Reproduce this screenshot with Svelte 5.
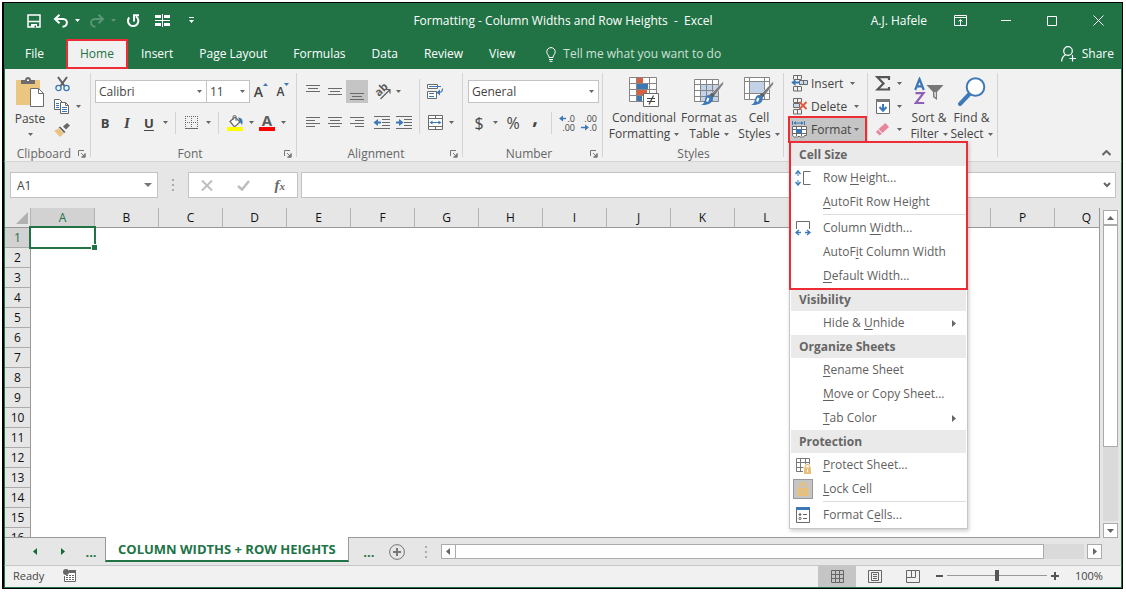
<script>
  const tabs = ['File', 'Home', 'Insert', 'Page Layout', 'Formulas', 'Data', 'Review', 'View'];
  const columns = 'ABCDEFGHIJKLMNOPQ'.split('');
  const rows = Array.from({ length: 16 }, (_, i) => i + 1);
  let zoom = $state(50);
</script>

{#snippet caret()}
  <svg class="caret" width="5" height="3" viewBox="0 0 5 3" aria-hidden="true"><path d="M0 0h5L2.5 3z" fill="currentColor" /></svg>
{/snippet}

{#snippet lines(y, kind)}
  <svg width="16" height="16" viewBox="0 0 16 16" stroke="#6a6a6a" shape-rendering="crispEdges" aria-hidden="true">
    {#if kind === 'left'}
      <path d="M1 2.5h14M1 5.5h9M1 8.5h14M1 11.5h9" />
    {:else if kind === 'center'}
      <path d="M1 2.5h14M3 5.5h10M1 8.5h14M3 11.5h10" />
    {:else if kind === 'right'}
      <path d="M1 2.5h14M6 5.5h9M1 8.5h14M6 11.5h9" />
    {:else}
      <path d="M1 {y + 0.5}h14M3 {y + 3.5}h10M1 {y + 6.5}h14" />
    {/if}
  </svg>
{/snippet}

{#snippet indent(right)}
  <svg width="18" height="16" viewBox="0 0 18 16" fill="none" aria-hidden="true">
    <path d="M1 1.5h16M9 4.5h8M9 7.5h8M9 10.5h8M1 13.5h16" stroke="#6a6a6a" shape-rendering="crispEdges" />
    {#if right}
      <path d="M1 7.5h5" stroke="#3b78b5" stroke-width="2" /><path d="M4 4l4.500 3.500L4 11z" fill="#3b78b5" />
    {:else}
      <path d="M3 7.500h5" stroke="#3b78b5" stroke-width="2" /><path d="M5 4L.5 7.500 5 11z" fill="#3b78b5" />
    {/if}
  </svg>
{/snippet}

{#snippet launcher(label)}
  <button class="launcher" aria-label={label}>
    <svg width="8" height="8" viewBox="0 0 8 8" fill="none" stroke="#777" aria-hidden="true"><path d="M.5 6V.5H6M3 3l3 3" /><path d="M7.500 3v4.500H3z" fill="#777" stroke="none" /><path d="M7 3.500V7H3.500" /></svg>
  </button>
{/snippet}

{#snippet brush()}
  <path d="M29.500 7L20.500 19l-3-2.500L29 4.500z" fill="#7d7d7d" stroke="#f0f0f0" stroke-width=".6" />
  <path d="M20.500 18.500c-.5-1.500-1.500-2.500-3-2.500l-2 2 3 3z" fill="#5f5f5f" />
  <path d="M15 18c2 0 3.800 1.500 3.800 3.500 0 4-4 7-11.800 6.500 3-1 3.500-3 4-5.500.5-2.500 2-4.500 4-4.500z" fill="#3f7ab8" />
  <path d="M14.500 21l-1.500 3.500" stroke="#fff" stroke-width="2" />
{/snippet}

{#snippet cellsIcon(kind)}
  <svg width="17" height="17" viewBox="0 0 17 17" fill="none" stroke="#6a6a6a" aria-hidden="true">
    {#if kind === 'format'}
      <path d="M1.500 0v4M13.500 0v4M3 2h9" stroke="#3b78b5" /><path d="M5 .2L2.500 2 5 3.800zM10 .2L12.500 2 10 3.800z" fill="#3b78b5" stroke="none" />
      <path d="M1.500 5.500h14v9h-2l-1 1.500H9l-1-1-1 1H3.500l-2-1.500z" fill="#fff" /><path d="M5.500 5v10M10.500 5v10M1 8.500h15M1 12.500h15" />
      <path d="M5 8h6v4H5z" fill="#3b78b5" stroke="none" />
    {:else}
      <path d="M2.500 4V.5h8V4M6.500.5V4M2.500 4.500h8M2.500 12v4h8v-4M6.500 12v4M2.500 11.500h8" />
      {#if kind === 'insert'}
        <path d="M8.500 5.500h8v4h-8zM12.500 5.500v4" fill="#c9daec" /><path d="M3 7.500h6" stroke="#3b78b5" stroke-width="2" /><path d="M4.500 4L.3 7.500l4.200 3.500z" fill="#3b78b5" stroke="none" />
      {:else}
        <path d="M2.500 5.500h6v4h-6z" fill="#c9daec" /><path d="M8.500 4l7 7M15.500 4l-7 7" stroke="#dd5b3f" stroke-width="2" />
      {/if}
    {/if}
  </svg>
{/snippet}

<div class="window">
  <header class="titlebar">
    <div class="quick">
      <button aria-label="Save"><svg width="14" height="14" viewBox="0 0 14 14" fill="none" stroke="#fff" stroke-width="1.500"><path d="M1 1h12v12H1zM1 7.500h12" /><path d="M4 10h6v3H4z" fill="#fff" stroke="none" /><path d="M7.500 11.500h1.500v2H7.500z" fill="#217346" stroke="none" /></svg></button>
      <span class="pair">
        <button aria-label="Undo"><svg width="16" height="14" viewBox="0 0 16 14" fill="none" stroke="#fff" stroke-width="2"><path d="M6.500 .8L2 5l4.500 4.200M2 5h8c5.500 0 5 7.500-.5 7.800" /></svg></button>
        <button class="drop" aria-label="Undo history">{@render caret()}</button>
      </span>
      <span class="pair faded">
        <button aria-label="Redo"><svg width="16" height="14" viewBox="0 0 16 14" fill="none" stroke="#fff" stroke-width="2"><path d="M9.500 .8L14 5 9.500 9.200M14 5H6C.5 5 1 12.500 6.500 12.800" /></svg></button>
        <button class="drop" aria-label="Redo history">{@render caret()}</button>
      </span>
      <button aria-label="Repeat"><svg width="14" height="14" viewBox="0 0 14 14" fill="none" stroke="#fff" stroke-width="2"><path d="M3.200 3.500A5.200 5.200 0 1 0 10 2.500M8 7.500V1.200h5" /></svg></button>
      <button class="wide" aria-label="Merge layout"><svg width="15" height="13" viewBox="0 0 15 13" fill="#fff" shape-rendering="crispEdges"><path d="M0 1h6v3H0zM9 1h6v3H9zM0 9h6v3H0zM9 9h6v3H9zM7 0h1v13H7zM0 6h15v1H0z" /></svg></button>
      <button aria-label="Customize toolbar"><svg width="5" height="7" viewBox="0 0 5 7" fill="#fff"><path d="M0 0h5v1H0zM0 3h5L2.500 6z" /></svg></button>
    </div>
    <h1>Formatting - Column Widths and Row Heights&nbsp; -&nbsp; Excel</h1>
    <div class="system">
      <span class="user">A.J. Hafele</span>
      <button aria-label="Ribbon display options"><svg width="13" height="11" viewBox="0 0 13 11" fill="none" stroke="#fff"><path d="M.5.5h12v10H.5zM.5 2.500h12M6.500 10V5M4.500 6.500l2-2 2 2" /></svg></button>
      <button aria-label="Minimize"><svg width="10" height="10" viewBox="0 0 10 10" stroke="#fff"><path d="M0 4.500h10" /></svg></button>
      <button aria-label="Maximize"><svg width="10" height="10" viewBox="0 0 10 10" fill="none" stroke="#fff"><path d="M.5.5h9v9h-9z" /></svg></button>
      <button aria-label="Close"><svg width="11" height="11" viewBox="0 0 11 11" stroke="#fff"><path d="M.5.500l10 10M10.500.5l-10 10" /></svg></button>
    </div>
  </header>

  <nav class="tabs">
    {#each tabs as tab}
      <button class="tab" class:active={tab === 'Home'}>{tab}</button>
    {/each}
    <button class="tell">
      <svg width="10" height="15" viewBox="0 0 10 15" fill="none" stroke="#fff" aria-hidden="true"><path d="M3 10.500C3 8 .8 7.500.8 4.800a4.200 4.200 0 0 1 8.400 0C9.200 7.500 7 8 7 10.500zM3 12.500h4M3.500 14.300h3" /></svg>
      Tell me what you want to do
    </button>
    <button class="share">
      <svg width="15" height="16" viewBox="0 0 15 16" fill="none" stroke="#fff" stroke-width="1.200" aria-hidden="true"><circle cx="7" cy="5" r="4.300" /><path d="M.6 15.500c.2-3.500 1.700-5.500 4-6.700M8.500 12.500H15M11.500 9v6.500" /></svg>
      Share
    </button>
  </nav>

  <section class="ribbon" aria-label="Ribbon">
    <div class="group clipboard">
      <div class="body">
        <button class="big paste">
          <svg width="28" height="31" viewBox="0 0 28 31" aria-hidden="true"><path d="M0 3h24v25H0z" fill="#ebc680" /><path d="M5 7V3h4c0-4 6-4 6 0h4v4z" fill="#6c6c6c" /><path d="M11 2.500h2V4h-2z" fill="#fff" /><path d="M14.500 11.500h8l5 5v13h-13z" fill="#fff" stroke="#6c6c6c" /><path d="M22.500 11.500v5h5" fill="none" stroke="#6c6c6c" /></svg>
          <span>Paste</span>{@render caret()}
        </button>
        <div class="stack">
          <div class="line"><button class="tool" aria-label="Cut"><svg width="15" height="16" viewBox="0 0 15 16" fill="none"><path d="M3 1l6.500 9M12 1L5.500 10" stroke="#5d5d5d" stroke-width="2" /><circle cx="3.500" cy="12" r="2.600" stroke="#3b78b5" stroke-width="1.300" /><circle cx="11.500" cy="12" r="2.600" stroke="#3b78b5" stroke-width="1.300" /></svg></button></div>
          <div class="line"><button class="tool" aria-label="Copy"><svg width="16" height="15" viewBox="0 0 16 15" fill="#fff" stroke="#666"><path d="M.5.5h5l3 3v7h-8z" /><path d="M6.500 3.500h5l3 3v8h-8z" /><path d="M11.500 3.500v3h3" fill="none" /><path d="M2 4.500h3M2 6.500h3M2 8.500h3M8 8.500h5M8 10.500h5M8 12.500h5" stroke="#3b78b5" /></svg></button><button class="drop" aria-label="Copy options">{@render caret()}</button></div>
          <div class="line"><button class="tool" aria-label="Format painter"><svg width="16" height="14" viewBox="0 0 16 14"><path d="M13 0l3 2.500-4 4-3-3z" fill="#666" /><path d="M6 3l6 6-2 1.500L4.500 4.500z" fill="#666" stroke="#f0f0f0" stroke-width=".8" /><path d="M4.500 5l5 5.500L6 14 0 7.500c2 0 3-1 4.500-2.500z" fill="#ebc27d" /></svg></button></div>
        </div>
      </div>
      <div class="caption"><span>Clipboard</span>{@render launcher('Clipboard settings')}</div>
    </div>

    <div class="group font">
      <div class="body rows">
        <div class="line">
          <label class="select face"><select aria-label="Font"><option>Calibri</option></select>{@render caret()}</label>
          <label class="select size"><select aria-label="Font size"><option>11</option></select>{@render caret()}</label>
          <button class="tool grow" aria-label="Increase font size"><b class="a1">A</b><svg width="5" height="3" viewBox="0 0 5 3"><path d="M0 3h5L2.500 0z" fill="#3b78b5" /></svg></button>
          <button class="tool grow" aria-label="Decrease font size"><b class="a2">A</b><svg width="5" height="3" viewBox="0 0 5 3"><path d="M0 0h5L2.500 3z" fill="#3b78b5" /></svg></button>
        </div>
        <div class="line">
          <button class="tool letter"><b>B</b></button><button class="tool letter"><i>I</i></button><button class="tool letter"><u>U</u></button><button class="drop" aria-label="Underline style">{@render caret()}</button>
          <span class="rule"></span>
          <button class="tool" aria-label="Borders"><svg width="14" height="14" viewBox="0 0 14 14" fill="none" stroke="#6a6a6a"><path d="M.5 0v13M6.500 0v13M12.500 0v13M0 .5h13M0 6.500h13" stroke-dasharray="1 1" /><path d="M0 12.500h13" /></svg></button><button class="drop" aria-label="Border style">{@render caret()}</button>
          <span class="rule"></span>
          <button class="tool" aria-label="Fill color"><svg width="17" height="16" viewBox="0 0 17 16"><path d="M3 6.500L8 2l5 5-5.500 5z" fill="#fff" stroke="#666" stroke-width="1.200" /><path d="M6 5V1.500C6 0 9 0 9 1.500V6" fill="none" stroke="#666" /><path d="M11 2.500c4 0 5.500 3 4 7.500l-2-3z" fill="#3b78b5" /><path d="M0 12h16v4H0z" fill="#ff0" /></svg></button><button class="drop" aria-label="Fill colors">{@render caret()}</button>
          <button class="tool ink" aria-label="Font color"><b>A</b></button><button class="drop" aria-label="Font colors">{@render caret()}</button>
        </div>
      </div>
      <div class="caption"><span>Font</span>{@render launcher('Font settings')}</div>
    </div>

    <div class="group alignment">
      <div class="body">
        <div class="rows first">
          <div class="line">
            <button class="tool" aria-label="Top align">{@render lines(1, 'v')}</button><button class="tool" aria-label="Middle align">{@render lines(4, 'v')}</button><button class="tool on" aria-label="Bottom align">{@render lines(9, 'v')}</button>
            <button class="tool apart" aria-label="Orientation"><svg class="slant" width="17" height="16" viewBox="0 0 17 16" fill="none" stroke="#5d5d5d"><path d="M6.500 15L15.500 6M12 5.500h4v4" stroke-width="1.200" /><text x="0" y="0" transform="translate(5 13) rotate(-45)" font-size="11" font-weight="bold" fill="#5d5d5d" stroke="none">ab</text></svg></button><button class="drop" aria-label="Orientation options">{@render caret()}</button>
          </div>
          <div class="line">
            <button class="tool" aria-label="Align left">{@render lines(0, 'left')}</button><button class="tool" aria-label="Center">{@render lines(0, 'center')}</button><button class="tool" aria-label="Align right">{@render lines(0, 'right')}</button>
            <button class="tool apart" aria-label="Decrease indent">{@render indent(false)}</button><button class="tool" aria-label="Increase indent">{@render indent(true)}</button>
          </div>
        </div>
        <span class="rule tall"></span>
        <div class="rows">
          <div class="line"><button class="tool" aria-label="Wrap text"><svg width="17" height="16" viewBox="0 0 17 16" fill="none" stroke="#6a6a6a"><path d="M.5.5h10v4H.5zM.5 7.500h9v7H.5z" fill="#fff" /><path d="M2 2.500h12M2 9.500h5M2 12.500h5M15.500 4.500c0 3.500-1.500 4-4 4" stroke="#3b78b5" stroke-width="1.200" /><path d="M13 5.500L9.500 8.500 13 11.500z" fill="#3b78b5" stroke="none" /></svg></button></div>
          <div class="line"><button class="tool" aria-label="Merge and center"><svg width="15" height="15" viewBox="0 0 15 15" fill="none" stroke="#6a6a6a"><path d="M.5.5h14v14H.5z" fill="#fff" /><path d="M0 3.500h15M0 11.500h15M7.500 0v3M7.500 12v3" /><path d="M3 7.500h9" stroke="#3b78b5" /><path d="M4.500 5.500l-3 2 3 2zM10.500 5.500l3 2-3 2z" fill="#3b78b5" stroke="none" /></svg></button><button class="drop" aria-label="Merge options">{@render caret()}</button></div>
        </div>
      </div>
      <div class="caption"><span>Alignment</span>{@render launcher('Alignment settings')}</div>
    </div>

    <div class="group number">
      <div class="body rows">
        <div class="line"><label class="select general"><select aria-label="Number format"><option>General</option></select>{@render caret()}</label></div>
        <div class="line">
          <button class="tool sign">$</button><button class="drop" aria-label="Currency options">{@render caret()}</button><button class="tool sign percentage">%</button><button class="tool sign comma">,</button>
          <span class="rule"></span>
          <button class="tool decimals" aria-label="Increase decimal"><span><svg width="8" height="7" viewBox="0 0 8 7"><path d="M2 3.500h5" stroke="#3b78b5" stroke-width="1.500" /><path d="M4 .5L0 3.500l4 3z" fill="#3b78b5" /></svg>.0</span><span>.00</span></button>
          <button class="tool decimals" aria-label="Decrease decimal"><span>.00</span><span><svg width="8" height="7" viewBox="0 0 8 7"><path d="M0 3.500h5" stroke="#3b78b5" stroke-width="1.500" /><path d="M4 .5l4 3-4 3z" fill="#3b78b5" /></svg>.0</span></button>
        </div>
      </div>
      <div class="caption"><span>Number</span>{@render launcher('Number settings')}</div>
    </div>

    <div class="group styles">
      <div class="body">
        <button class="big cond">
          <svg width="30" height="30" viewBox="0 0 30 30" fill="none" aria-hidden="true"><path d="M.5.5h27v24H.5z" fill="#fff" /><path d="M8 0h6v6H8zM8 12h10v6H8z" fill="#d9603e" /><path d="M8 6h11v6H8zM8 18h5v6H8z" fill="#3b78b5" /><path d="M.5.500h27v24H.5zM7.500.5v24M20.500.5v24M.5 6.500h27M.5 12.500h27M.5 18.500h27" stroke="#858585" /><path d="M14.500 16.500h15v13h-15z" fill="#fff" stroke="#6a6a6a" /><path d="M18 21.500h8M18 24.500h8M24.500 18.500l-4.500 9" stroke="#444" stroke-width="1.200" /></svg>
          <span>Conditional</span><span>Formatting {@render caret()}</span>
        </button>
        <button class="big table">
          <svg width="30" height="30" viewBox="0 0 30 30" fill="none" aria-hidden="true"><path d="M.5 2.500h24v22H.5z" fill="#fff" /><path d="M7 8h18v17H7z" fill="#c2d3e8" /><path d="M.5 2.500h24v22H.5zM6.500 2.500v22M12.500 2.500v22M18.500 2.500v22M.5 7.500h24M.5 13.500h24M.5 19.500h24" stroke="#858585" />{@render brush()}</svg>
          <span>Format as</span><span>Table {@render caret()}</span>
        </button>
        <button class="big cell">
          <svg width="30" height="30" viewBox="0 0 30 30" fill="none" aria-hidden="true"><path d="M.5.500h25v22H.5z" fill="#fff" /><path d="M6 5h15v11H6z" fill="#c2d3e8" /><path d="M.5.500h25v22H.5zM5.500.5v22M20.500.5v22M.5 4.500h25M.5 16.500h25" stroke="#858585" />{@render brush()}</svg>
          <span>Cell</span><span>Styles {@render caret()}</span>
        </button>
      </div>
      <div class="caption"><span>Styles</span></div>
    </div>

    <div class="group cells">
      <div class="body stack">
        <button class="action">{@render cellsIcon('insert')}<span class="ins">Insert</span>{@render caret()}</button>
        <button class="action">{@render cellsIcon('delete')}<span class="ins">Delete</span>{@render caret()}</button>
        <div class="anchor">
          <button class="action open" aria-expanded="true">{@render cellsIcon('format')}<span>Format</span>{@render caret()}</button>
          <div class="menu" role="menu">
            <section class="marked">
              <h2>Cell Size</h2>
              <button class="item" role="menuitem"><span class="icon"><svg width="16" height="16" viewBox="0 0 16 16" fill="none"><path d="M3 1v5M3 10v5" stroke="#3b78b5" /><path d="M.5 4L3 1l2.500 3M.5 12L3 15l2.500-3" stroke="#3b78b5" stroke-width="1.400" /><path d="M15.500 1.500h-7v13h7" stroke="#6a6a6a" /></svg></span><span>Row <u>H</u>eight...</span></button>
              <button class="item" role="menuitem"><span class="icon"></span><span><u>A</u>utoFit Row Height</span></button>
              <hr />
              <button class="item" role="menuitem"><span class="icon"><svg width="16" height="16" viewBox="0 0 16 16" fill="none"><path d="M1.500 9V1.500h13V9" stroke="#6a6a6a" /><path d="M1 12.500h5M10 12.500h5M4 10l-3 2.500 3 2.500M12 10l3 2.500-3 2.500" stroke="#3b78b5" stroke-width="1.300" /></svg></span><span>Column <u>W</u>idth...</span></button>
              <button class="item" role="menuitem"><span class="icon"></span><span>AutoF<u>i</u>t Column Width</span></button>
              <button class="item" role="menuitem"><span class="icon"></span><span><u>D</u>efault Width...</span></button>
            </section>
            <section>
              <h2>Visibility</h2>
              <button class="item" role="menuitem"><span class="icon"></span><span>Hide &amp; <u>U</u>nhide</span><svg class="more" width="4" height="7" viewBox="0 0 4 7"><path d="M0 0l4 3.500L0 7z" fill="#666" /></svg></button>
            </section>
            <section>
              <h2>Organize Sheets</h2>
              <button class="item" role="menuitem"><span class="icon"></span><span><u>R</u>ename Sheet</span></button>
              <button class="item" role="menuitem"><span class="icon"></span><span><u>M</u>ove or Copy Sheet...</span></button>
              <button class="item" role="menuitem"><span class="icon"></span><span><u>T</u>ab Color</span><svg class="more" width="4" height="7" viewBox="0 0 4 7"><path d="M0 0l4 3.500L0 7z" fill="#666" /></svg></button>
            </section>
            <section>
              <h2>Protection</h2>
              <button class="item" role="menuitem"><span class="icon"><svg width="17" height="17" viewBox="0 0 17 17" fill="none"><path d="M8 14.500H1.500v-13h13V7M5.500 1.500v13M10.500 1.500V7M1.500 5.500h13M1.500 10.500h7" stroke="#777" /><path d="M9 10.500h7V17H9z" fill="#e9c07a" /><path d="M10.500 11V8.800c0-2 4-2 4 0V11" stroke="#e9c07a" stroke-width="1.300" /><path d="M12.500 12.500v2.500" stroke="#fff" /></svg></span><span><u>P</u>rotect Sheet...</span></button>
              <button class="item" role="menuitem"><span class="icon"><span class="checked"><svg width="12" height="14" viewBox="0 0 12 14" fill="none"><path d="M.5 6h11v8H.5z" fill="#e9c07a" /><path d="M3 7V3.500c0-3 6-3 6 0V7" stroke="#e9c07a" stroke-width="2" /><path d="M6 8.500v3" stroke="#c5c5c5" stroke-width="1.500" /></svg></span></span><span><u>L</u>ock Cell</span></button>
              <hr />
              <button class="item" role="menuitem"><span class="icon"><svg width="14" height="16" viewBox="0 0 14 16" fill="none"><path d="M.5.500h13v15H.5z" fill="#fff" stroke="#6a6a6a" /><path d="M0 0h14v3H0z" fill="#3b78b5" /><circle cx="4" cy="7.500" r="1.300" fill="#666" /><circle cx="4" cy="11.500" r="1.100" stroke="#666" /><path d="M7 7.500h4M7 11.500h4" stroke="#666" /></svg></span><span>Format C<u>e</u>lls...</span></button>
            </section>
          </div>
        </div>
      </div>
      <div class="caption"></div>
    </div>

    <div class="group editing">
      <div class="body">
        <div class="stack">
          <div class="line"><button class="tool" aria-label="AutoSum"><svg width="16" height="15" viewBox="0 0 16 15" fill="none"><path d="M14 4V1.200H2.500L8.500 7.500l-6 6H14V11" stroke="#555" stroke-width="2.200" /></svg></button><button class="drop" aria-label="AutoSum options">{@render caret()}</button></div>
          <div class="line"><button class="tool" aria-label="Fill"><svg width="14" height="15" viewBox="0 0 14 15" fill="none"><path d="M.5.500h13v14H.5z" fill="#fff" stroke="#6a6a6a" /><path d="M0 0h14v3H0z" fill="#777" /><path d="M7 5v6M3.500 8L7 11.800 10.500 8" stroke="#3b78b5" stroke-width="2" /></svg></button><button class="drop" aria-label="Fill options">{@render caret()}</button></div>
          <div class="line"><button class="tool" aria-label="Clear"><svg width="14" height="13" viewBox="0 0 14 13"><path d="M9.500 0l3.500 4-6.500 6L2.500 6z" fill="#e8859b" /><path d="M1.800 6.700l4 4L3.500 12.500 0 9z" fill="#e8859b" /></svg></button><button class="drop" aria-label="Clear options">{@render caret()}</button></div>
        </div>
        <button class="big sort">
          <svg width="30" height="30" viewBox="0 0 30 30" aria-hidden="true"><g fill="none" stroke-width="2.200"><path d="M1.200 13L5.500 2l4.300 11M2.500 9.300h6" stroke="#3b78b5" /><path d="M1.500 16.200h8L1.800 26h8.400" stroke="#8d5fb5" /></g><path d="M12.500 8h17l-6.500 7v8l-4-3v-5z" fill="#777" /><path d="M20.500 15v4.500l1.200 1V15z" fill="#fff" /></svg>
          <span>Sort &amp;</span><span>Filter {@render caret()}</span>
        </button>
        <button class="big find">
          <svg width="28" height="30" viewBox="0 0 28 30" aria-hidden="true"><path d="M2 27L11 17.500" stroke="#3f7ab8" stroke-width="4" stroke-linecap="round" /><circle cx="17.500" cy="10" r="8.800" fill="#fff" stroke="#3f7ab8" stroke-width="2" /></svg>
          <span>Find &amp;</span><span>Select {@render caret()}</span>
        </button>
      </div>
      <div class="caption"></div>
    </div>
    <button class="collapse" aria-label="Collapse ribbon"><svg width="9" height="6" viewBox="0 0 9 6" fill="none" stroke="#666" stroke-width="2"><path d="M.5 5l4-4 4 4" /></svg></button>
  </section>

  <div class="formula">
    <label class="select name"><input aria-label="Name box" value="A1" /><svg width="8" height="4" viewBox="0 0 8 4"><path d="M0 0h8L4 4z" fill="#777" /></svg></label>
    <svg class="grip" width="2" height="12" viewBox="0 0 2 12" fill="#aaa" aria-hidden="true"><path d="M0 0h2v2H0zM0 5h2v2H0zM0 10h2v2H0z" /></svg>
    <div class="entry">
      <button aria-label="Cancel"><svg width="12" height="11" viewBox="0 0 12 11" stroke="#bdbdbd" stroke-width="2"><path d="M1 .5l10 10M11 .5l-10 10" /></svg></button>
      <button aria-label="Enter"><svg width="13" height="11" viewBox="0 0 13 11" fill="none" stroke="#bdbdbd" stroke-width="2.500"><path d="M1 6l4 3.500L12 1" /></svg></button>
      <button class="fx" aria-label="Insert function"><i>f<small>x</small></i></button>
    </div>
    <label class="select bar"><input aria-label="Formula bar" /><svg width="8" height="6" viewBox="0 0 8 6" fill="none" stroke="#666" stroke-width="2"><path d="M1 1l3 3 3-3" /></svg></label>
  </div>

  <div class="workspace">
    <div class="sheet">
      <table>
        <thead>
          <tr><th class="corner"><svg width="12" height="12" viewBox="0 0 12 12"><path d="M12 0v12H0z" fill="#b1b1b1" /></svg></th>{#each columns as c}<th class:current={c === 'A'}>{c}</th>{/each}</tr>
        </thead>
        <tbody>
          {#each rows as r}
            <tr><th class:current={r === 1}>{r}</th>{#each columns as c}<td class:selected={r === 1 && c === 'A'}></td>{/each}</tr>
          {/each}
        </tbody>
      </table>
    </div>
    <div class="vscroll">
      <button class="arrow" aria-label="Scroll up"><svg width="7" height="4" viewBox="0 0 7 4"><path d="M0 4h7L3.500 0z" fill="#666" /></svg></button>
      <span class="thumb"></span><span class="track"></span>
      <button class="arrow" aria-label="Scroll down"><svg width="7" height="4" viewBox="0 0 7 4"><path d="M0 0h7L3.500 4z" fill="#666" /></svg></button>
    </div>
  </div>

  <div class="sheets">
    <button class="step" aria-label="Previous sheet"><svg width="4" height="7" viewBox="0 0 4 7"><path d="M4 0L0 3.500 4 7z" fill="#0e6b38" /></svg></button>
    <button class="step" aria-label="Next sheet"><svg width="4" height="7" viewBox="0 0 4 7"><path d="M0 0l4 3.500L0 7z" fill="#0e6b38" /></svg></button>
    <button class="step dots">...</button>
    <button class="sheet-tab">COLUMN WIDTHS + ROW HEIGHTS</button>
    <button class="step dots wider">...</button>
    <button class="add" aria-label="New sheet"><svg width="16" height="16" viewBox="0 0 16 16" fill="none" stroke="#777"><circle cx="8" cy="8" r="7.400" /><path d="M8 4v8M4 8h8" stroke-width="2" /></svg></button>
    <svg class="grip" width="2" height="12" viewBox="0 0 2 12" fill="#aaa" aria-hidden="true"><path d="M0 0h2v2H0zM0 5h2v2H0zM0 10h2v2H0z" /></svg>
    <div class="hscroll">
      <button class="arrow" aria-label="Scroll left"><svg width="4" height="7" viewBox="0 0 4 7"><path d="M4 0L0 3.500 4 7z" fill="#666" /></svg></button>
      <span class="thumb"></span><span class="track"></span>
      <button class="arrow" aria-label="Scroll right"><svg width="4" height="7" viewBox="0 0 4 7"><path d="M0 0l4 3.500L0 7z" fill="#666" /></svg></button>
    </div>
  </div>

  <footer class="status">
    <span>Ready</span>
    <button class="macro" aria-label="Record macro"><svg width="13" height="13" viewBox="0 0 13 13" fill="none"><path d="M3 3.500h9.500v9H1.500V7" fill="#fff" stroke="#666" /><path d="M6 1h7v3H6z" fill="#666" /><circle cx="3" cy="3" r="3" fill="#666" /><path d="M3 6.500h2M6 6.500h2M9 6.500h2M3 8.500h2M6 8.500h2M9 8.500h2M3 10.500h2M6 10.500h2M9 10.500h2" stroke="#666" /></svg></button>
    <div class="views">
      <button class="on" aria-label="Normal view"><svg width="13" height="13" viewBox="0 0 13 13" fill="none" stroke="#666"><path d="M.5.500h12v12H.5zM4.500 0v13M8.500 0v13M0 4.500h13M0 8.500h13" /></svg></button>
      <button aria-label="Page layout view"><svg width="14" height="13" viewBox="0 0 14 13" fill="none" stroke="#666"><path d="M.5.500h13v12H.5zM3.500 2.500h7v8h-7zM5 4.500h4M5 6.500h4M5 8.500h4" /></svg></button>
      <button aria-label="Page break view"><svg width="14" height="13" viewBox="0 0 14 13" fill="none" stroke="#666"><path d="M.5.500h13v12H.5zM5.500.5v7h4v-7M5.500 7.500h-5" /></svg></button>
    </div>
    <div class="zoom">
      <button aria-label="Zoom out"><svg width="7" height="8" viewBox="0 0 7 8"><path d="M0 4h7" stroke="#555" stroke-width="2" /></svg></button>
      <input type="range" min="0" max="100" bind:value={zoom} aria-label="Zoom" />
      <button aria-label="Zoom in"><svg width="8" height="8" viewBox="0 0 8 8"><path d="M0 4h8M4 0v8" stroke="#555" stroke-width="2" /></svg></button>
      <span class="percent">100%</span>
    </div>
  </footer>
</div>

<style>
  :global(body) { margin: 0; background: #fff; }
  :global(#app) { display: contents; }
  .window, .window * { box-sizing: border-box; }
  .window {
    margin: 2px 3px 0 2px;
    height: calc(100vh - 6px);
    min-height: 560px;
    display: flex;
    flex-direction: column;
    border: 1px solid #000;
    border-width: 1px 1px 1px 2px;
    background: #e6e6e6;
    font: 12px/16px 'Open Sans', 'Noto Sans', sans-serif;
    color: #444;
    overflow: hidden;
  }
  button, input, select { font: inherit; color: inherit; border: 0; padding: 0; margin: 0; background: none; outline: none; border-radius: 0; }
  button { display: flex; align-items: center; justify-content: center; flex: none; white-space: nowrap; }
  svg { flex: none; display: block; }
  h1, h2 { margin: 0; font-size: 12px; line-height: 16px; }

  .titlebar { display: grid; grid-template-columns: 1fr auto 1fr; align-items: center; height: 35px; background: #217346; color: #fff; flex: none; }
  .titlebar h1 { font-weight: 400; }
  .quick { display: flex; gap: 4px; padding-left: 18px; }
  .quick button { width: 22px; height: 24px; }
  .quick > button:first-child { width: 24px; }
  .quick .wide { width: 28px; }
  .quick .drop { width: 10px; }
  .pair { display: flex; }
  .faded { opacity: .25; }
  .system { display: flex; align-items: center; justify-content: flex-end; padding-right: 1px; }
  .system button { width: 46px; height: 30px; }
  .user { margin-right: 10px; white-space: nowrap; }

  .tabs { display: flex; height: 31px; padding: 1px 8px 0; background: #217346; color: #fff; flex: none; }
  .tab { padding: 0 13px; }
  .tab:first-child { margin-right: 9px; }
  .tab.active { padding: 0 14px; background: #f1f1f1; color: #217346; box-shadow: inset 0 0 0 2px #ee2c35; }
  .tell { gap: 7px; margin-left: 18px; color: #cfe0d6; }
  .share { gap: 6px; margin-left: auto; }

  .ribbon { display: flex; height: 93px; background: #f1f1f1; border-bottom: 1px solid #d4d4d4; border-left: 1px solid #217346; border-right: 1px solid #217346; flex: none; }
  .group { position: relative; display: flex; flex-direction: column; flex: none; }
  .group::after { content: ''; position: absolute; right: 0; top: 4px; bottom: 4px; width: 1px; background: #d4d4d4; }
  .body { display: flex; height: 76px; padding-top: 3px; }
  .caption { display: flex; align-items: center; height: 16px; padding: 1px 5px 0; color: #666; }
  .caption span { flex: 1; text-align: center; }
  .launcher { width: 8px; }
  .stack { display: flex; flex-direction: column; }
  .line { display: flex; align-items: center; height: 23px; }
  .rows { display: flex; flex-direction: column; gap: 8px; padding-top: 11px; }
  .rows.first { padding-left: 5px; }
  .alignment .rows { padding-top: 8px; }
  .tool { width: 22px; height: 23px; }
  .drop { width: 10px; height: 23px; }
  .apart { margin-left: 3px; }
  .on { background: #c5c5c5; }
  .slant { overflow: visible; }
  .caret { color: #666; }
  .quick .caret { color: #fff; }
  .rule { width: 1px; height: 22px; margin: 0 5px; background: #d4d4d4; flex: none; }
  .rule.tall { height: 55px; margin: 7px 4px 0; }

  .clipboard { width: 86px; }
  .font { width: 206px; }
  .alignment { width: 166px; }
  .number { width: 140px; }
  .styles { width: 181px; }
  .cells { width: 84px; }
  .editing { width: 130px; }

  .big { flex-direction: column; justify-content: flex-start; padding-top: 5px; }
  .big span { display: flex; align-items: center; gap: 4px; height: 16px; }
  .big > svg:first-child { margin-bottom: 3px; }
  .paste { width: 36px; margin: 0 3px 0 7px; }
  .paste .caret { margin-top: 6px; }
  .big.cond { width: 72px; margin-left: 5px; }
  .big.table { width: 58px; }
  .big.cell { width: 42px; }
  .big.sort { width: 42px; }
  .big.find { width: 43px; }
  .editing .stack { width: 40px; padding-left: 4px; }

  .font .rows { padding-left: 3px; }
  .number .rows { padding-left: 5px; }
  .select { display: grid; align-items: center; height: 23px; background: #fff; border: 1px solid #c3c3c3; flex: none; }
  .select > * { grid-area: 1 / 1; }
  .select select, .select input { appearance: none; width: 100%; height: 100%; padding: 0 3px; }
  .select svg { justify-self: end; margin-right: 4px; pointer-events: none; }
  .face { width: 112px; margin-left: 1px; }
  .size { width: 44px; margin-left: -1px; }
  .general { width: 131px; }
  .grow { align-items: center; }
  .grow svg { align-self: flex-start; margin-top: 3px; }
  .a1 { font-size: 14px; font-weight: 600; }
  .a2 { font-size: 12px; font-weight: 600; }
  .letter { font-size: 13px; }
  .letter i { font-family: 'Liberation Serif', serif; font-size: 15px; font-weight: 700; }
  .letter u { font-weight: 700; text-underline-offset: 2px; }
  .ink b { width: 16px; height: 17px; font-size: 15px; line-height: 13px; color: #5d5d5d; border-bottom: 4px solid #f00; }
  .sign { font-size: 16px; color: #444; }
  .percentage { margin-left: 2px; }
  .comma { font-size: 20px; padding-bottom: 12px; font-weight: 700; }
  .number .rule { margin: 0 3px 0 5px; }
  .decimals { flex-direction: column; align-items: stretch; font-size: 9px; line-height: 9px; }
  .decimals span { display: flex; align-items: center; justify-content: flex-end; height: 9px; padding-right: 2px; }

  .cells .body { padding-left: 6px; }
  .action { display: flex; justify-content: flex-start; width: 75px; height: 23px; padding-left: 1px; gap: 3px; }
  .ins { margin-right: 4px; }
  .open { background: #c5c5c5; outline: 2px solid #ee2c35; }
  .anchor { position: relative; }
  .menu { position: absolute; z-index: 5; top: 23px; left: -1px; width: 179px; padding: 1px; background: #fff; border: 1px solid #c6c6c6; box-shadow: 1px 2px 4px rgba(0, 0, 0, .2); color: #5f5f5f; }
  .menu h2 { height: 23px; padding-left: 8px; line-height: 23px; font-weight: 700; color: #666; background: #eaeaea; }
  .marked { position: relative; outline: 2px solid #ee2c35; }
  .item { display: flex; justify-content: flex-start; width: 100%; height: 24px; gap: 8px; }
  .icon { display: flex; align-items: center; justify-content: center; width: 24px; height: 24px; }
  .item u { text-underline-offset: 2px; }
  .more { margin: 0 10px 0 auto; }
  .checked { display: flex; align-items: center; justify-content: center; width: 20px; height: 20px; background: #c5c5c5; border: 1px solid #999; }
  .menu hr { height: 1px; margin: 0 0 1px 32px; border: 0; background: #dcdcdc; }
  .collapse { width: 20px; height: 16px; margin: auto 5px 0 auto; }

  .formula { display: flex; align-items: center; padding: 10px 5px; border: 1px solid #217346; border-width: 0 1px; flex: none; }
  .formula .select { height: 26px; }
  .formula .select input { padding-left: 6px; }
  .name { width: 148px; }
  .formula .name svg { margin-right: 5px; }
  .grip { margin: 0 14px; }
  .entry { display: flex; align-items: center; justify-content: space-around; width: 110px; height: 26px; margin-right: 3px; background: #fff; border: 1px solid #c3c3c3; }
  .fx i { font: italic 700 15px/18px 'Liberation Serif', serif; color: #666; }
  .fx small { font-size: 11px; }
  .bar { flex: 1; }

  .workspace { display: flex; flex: 1; min-height: 0; border: 1px solid #217346; border-width: 0 1px; }
  .sheet { flex: 1; min-width: 0; overflow: hidden; border: 1px solid #999; border-width: 0 1px 1px 0; background: #fff; }
  table { table-layout: fixed; width: 1114px; border-collapse: separate; border-spacing: 0; }
  th { width: 64px; height: 20px; padding: 1px 0 0; line-height: 18px; font-weight: 400; color: #111; background: #e6e6e6; border-bottom: 1px solid #999; border-right: 1px solid #b4b4b4; }
  td { height: 20px; padding: 0; }
  .corner { width: 26px; }
  .corner svg { margin-left: 11px; }
  tbody th { border-bottom-color: #ababab; border-right-color: #999; }
  th.current { background: #d2d2d2; color: #217346; }
  .selected { position: relative; }
  .selected::before { content: ''; position: absolute; inset: -2px -1px -1px -2px; border: 2px solid #217346; }
  .selected::after { content: ''; position: absolute; right: -2px; bottom: -2px; width: 5px; height: 5px; background: #217346; border: solid #fff; border-width: 1px 0 0 1px; box-sizing: content-box; }
  .vscroll { display: flex; flex-direction: column; width: 15px; margin: 2px 3px 0 3px; }
  .arrow { width: 15px; height: 15px; background: #fff; border: 1px solid #ababab; }
  .thumb { background: #fff; border: 1px solid #ababab; }
  .track { background: #dadada; }
  .vscroll .thumb { flex: 221; }
  .vscroll .track { flex: 74; margin-bottom: 2px; }

  .sheets { display: flex; align-items: center; height: 27px; padding-left: 16px; border: 1px solid #217346; border-width: 0 1px; flex: none; }
  .step { width: 28px; height: 24px; }
  .dots { color: #217346; font-weight: 700; font-size: 13px; }
  .wider { width: 40px; }
  .sheet-tab { align-self: flex-start; height: 25px; margin-top: -1px; padding: 1px 12px 0; font-size: 13px; font-weight: 700; color: #217346; background: #fff; border: 1px solid #999; border-top: 0; border-bottom: 2px solid #217346; }
  .add { width: 16px; }
  .sheets .grip { margin: 0 14px 0 20px; }
  .hscroll { display: flex; flex: 1; height: 15px; margin-right: 19px; }
  .hscroll .thumb { flex: 589; margin-left: -1px; }
  .hscroll .track { flex: 40; margin-right: 3px; }

  .status { display: flex; align-items: center; height: 23px; padding: 0 0 2px 8px; background: #f1f1f1; border: 1px solid #217346; border-top-color: #c6c6c6; flex: none; font-size: 11px; }
  .macro { margin-left: 19px; }
  .views { display: flex; align-self: stretch; margin: 0 0 -2px auto; }
  .views button { width: 38px; }
  .zoom { display: flex; align-items: center; margin-left: 4px; }
  .zoom input { appearance: none; width: 100px; height: 12px; margin: 0 4px; background: linear-gradient(#999, #999) center / 100% 1px no-repeat; }
  .zoom input::-webkit-slider-thumb { appearance: none; width: 4px; height: 11px; background: #555; }
  .percent { width: 62px; padding-left: 16px; }
</style>
